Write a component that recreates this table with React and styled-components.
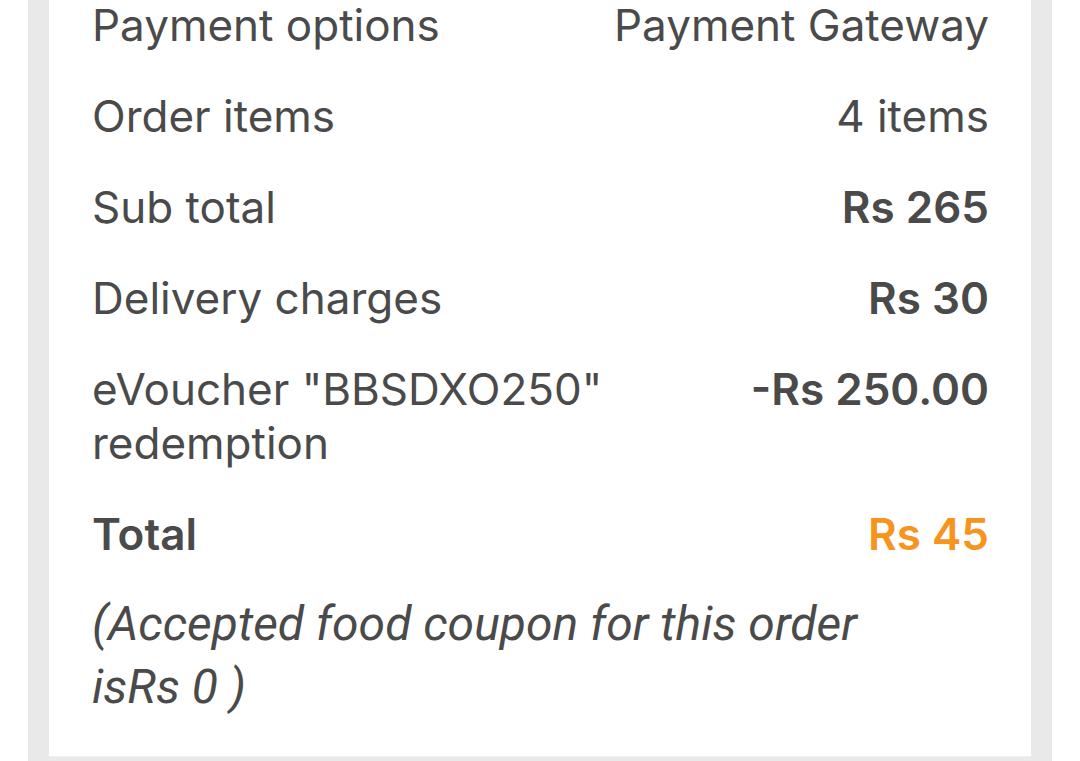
import React from 'react';
import styled, { createGlobalStyle } from 'styled-components';

const Global = createGlobalStyle`
  html, body {
    margin: 0;
    padding: 0;
    background: #fff;
    height: 761px;
    overflow: hidden;
  }
`;

const Page = styled.div`
  width: 1080px;
  height: 761px;
  background: #fff;
  display: flex;
  justify-content: flex-start;
  padding-left: 28px;
  box-sizing: border-box;
`;

const Rail = styled.div`
  width: 1024px;
  height: 761px;
  background: #e9e9e9;
  padding: 0 21px 4px;
  box-sizing: border-box;
`;

const Card = styled.div`
  background: #fff;
  height: calc(100% + 2px);
  margin-top: -2px;
  border-bottom: 1px solid #f1f1f1;
  padding: 0 42px 0 43px;
  box-sizing: border-box;
  display: flex;
  flex-direction: column;
  gap: 37px;
  font-family: Inter, "Liberation Sans", sans-serif;
  color: #4a4a4a;
`;

const Row = styled.div`
  display: flex;
  justify-content: space-between;
  align-items: flex-start;
  font-size: 44px;
  line-height: 54px;
`;

const Label = styled.div`
  font-weight: ${p => (p.bold ? 600 : 400)};
  max-width: 560px;
`;

const Value = styled.div`
  font-weight: ${p => (p.bold ? 600 : 400)};
  color: ${p => (p.accent ? '#f7941d' : '#4a4a4a')};
  text-align: right;
  white-space: nowrap;
`;

const Note = styled.div`
  font-family: Roboto, "Liberation Sans", sans-serif;
  font-style: italic;
  font-size: 48px;
  line-height: 63px;
  color: #4a4a4a;
  max-width: 820px;
  margin-top: -6px;
`;

const rows = [
  { label: 'Payment options', value: 'Payment Gateway' },
  { label: 'Order items', value: '4 items' },
  { label: 'Sub total', value: 'Rs 265', bold: true },
  { label: 'Delivery charges', value: 'Rs 30', bold: true },
  { label: 'eVoucher "BBSDXO250" redemption', value: '-Rs 250.00', bold: true },
];

export default function App() {
  return (
    <>
      <Global />
      <Page>
        <Rail>
          <Card>
            {rows.map(r => (
              <Row key={r.label}>
                <Label>{r.label}</Label>
                <Value bold={r.bold}>{r.value}</Value>
              </Row>
            ))}
            <Row>
              <Label bold>Total</Label>
              <Value bold accent>Rs 45</Value>
            </Row>
            <Note>(Accepted food coupon for this order isRs 0 )</Note>
          </Card>
        </Rail>
      </Page>
    </>
  );
}
